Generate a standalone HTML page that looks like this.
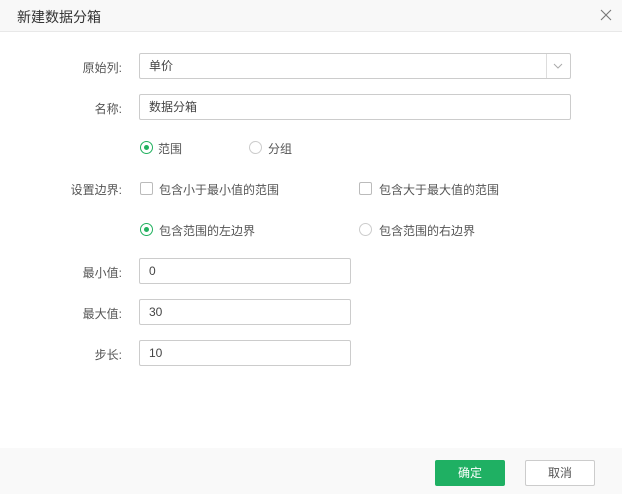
<!DOCTYPE html>
<html><head><meta charset="utf-8"><style>
*{box-sizing:border-box;margin:0;padding:0}
body{width:622px;height:494px;background:#fff;font-family:"Liberation Sans","Noto Sans CJK SC",sans-serif;font-size:12px;color:#333;position:relative;overflow:hidden}
.a{position:absolute}
.hdr{left:0;top:0;width:622px;height:32px;background:#f8f8f8;border-bottom:1px solid #e8e8e8}
.lbl{width:122px;text-align:right;left:0;color:#555}
.inp{border:1px solid #ccc;border-radius:2px;height:26px;line-height:24px;padding-left:9px;color:#444}
.rad{width:13px;height:13px;border:1px solid #ccc;border-radius:50%}
.rad.on{border-color:#22b15f}
.rad.on::after{content:"";position:absolute;left:3px;top:3px;width:5px;height:5px;border-radius:50%;background:#22b15f}
.cb{width:13px;height:13px;border:1px solid #bbb;border-radius:2px}
.t{color:#555}
.ftr{left:0;top:448px;width:622px;height:46px;background:#f9f9f9}
.btn{height:26px;width:70px;text-align:center;line-height:24px;border-radius:2px;font-size:12px}
</style></head><body>
<div class="a hdr"></div>
<div class="a" style="left:17px;top:7px;font-size:14px;color:#333">新建数据分箱</div>
<svg class="a" style="left:600px;top:9px" width="12" height="12"><path d="M1 1L11 11M11 1L1 11" stroke="#777" stroke-width="1.1"/></svg>

<div class="a lbl" style="top:59px">原始列:</div>
<div class="a inp" style="left:139px;top:53px;width:432px">单价</div>
<div class="a" style="left:546px;top:54px;width:1px;height:24px;background:#ddd"></div>
<svg class="a" style="left:553px;top:62px" width="10" height="8"><path d="M1 2L5 6L9 2" stroke="#aaa" fill="none"/></svg>

<div class="a lbl" style="top:100px">名称:</div>
<div class="a inp" style="left:139px;top:94px;width:432px">数据分箱</div>

<div class="a rad on" style="left:140px;top:141px"></div><div class="a t" style="left:158px;top:140px">范围</div>
<div class="a rad" style="left:249px;top:141px"></div><div class="a t" style="left:268px;top:140px">分组</div>

<div class="a lbl" style="top:181px">设置边界:</div>
<div class="a cb" style="left:140px;top:182px"></div><div class="a t" style="left:159px;top:181px">包含小于最小值的范围</div>
<div class="a cb" style="left:359px;top:182px"></div><div class="a t" style="left:379px;top:181px">包含大于最大值的范围</div>

<div class="a rad on" style="left:140px;top:223px"></div><div class="a t" style="left:159px;top:222px">包含范围的左边界</div>
<div class="a rad" style="left:359px;top:223px"></div><div class="a t" style="left:379px;top:222px">包含范围的右边界</div>

<div class="a lbl" style="top:264px">最小值:</div>
<div class="a inp" style="left:139px;top:258px;width:212px">0</div>
<div class="a lbl" style="top:305px">最大值:</div>
<div class="a inp" style="left:139px;top:299px;width:212px">30</div>
<div class="a lbl" style="top:346px">步长:</div>
<div class="a inp" style="left:139px;top:340px;width:212px">10</div>

<div class="a ftr"></div>
<div class="a btn" style="left:435px;top:460px;background:#1fb063;color:#fff;border:1px solid #1fb063">确定</div>
<div class="a btn" style="left:525px;top:460px;background:#fff;color:#555;border:1px solid #ccc">取消</div>
</body></html>
